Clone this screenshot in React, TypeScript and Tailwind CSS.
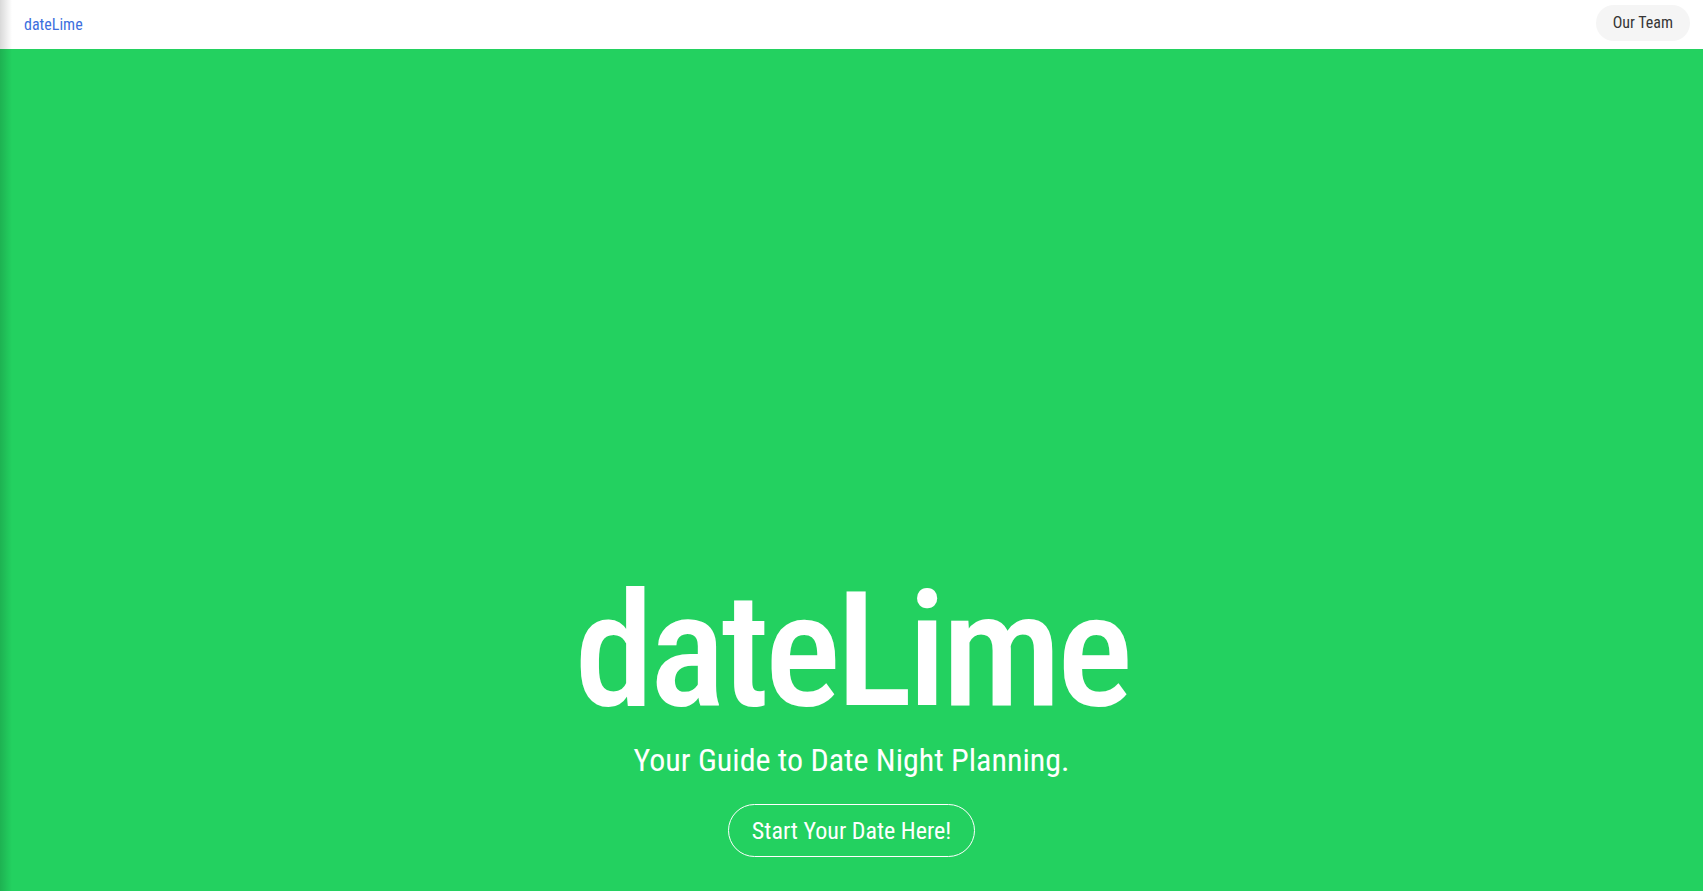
import React from "react";

export default function App() {
  return (
    <div className="relative min-h-[891px] flex flex-col font-['Roboto','Liberation_Sans',sans-serif] font-stretch-condensed">
      <header className="h-[49px] bg-white flex items-start justify-between pl-[24px] pr-[13px]">
        <a className="mt-[17px] text-[16px] text-[#3d6fde] leading-none">dateLime</a>
        <button className="mt-[5px] h-[36px] px-[17px] rounded-full bg-[#f5f5f5] text-[#363636] text-[16px] leading-none">
          Our Team
        </button>
      </header>
      <main className="flex-1 bg-[#23d160] flex flex-col items-center justify-end pb-[34px] text-white">
        <h1 className="text-[160px] leading-none font-medium tracking-[-4.5px]">dateLime</h1>
        <p className="mt-[9px] text-[32px] leading-[40px]">Your Guide to Date Night Planning.</p>
        <button className="mt-[24px] h-[53px] px-[23px] rounded-full border border-white text-[24px] leading-none flex items-center">
          Start Your Date Here!
        </button>
      </main>
      <div className="pointer-events-none absolute inset-y-0 left-0 w-[12px] bg-linear-to-r from-black/15 to-transparent" />
    </div>
  );
}
